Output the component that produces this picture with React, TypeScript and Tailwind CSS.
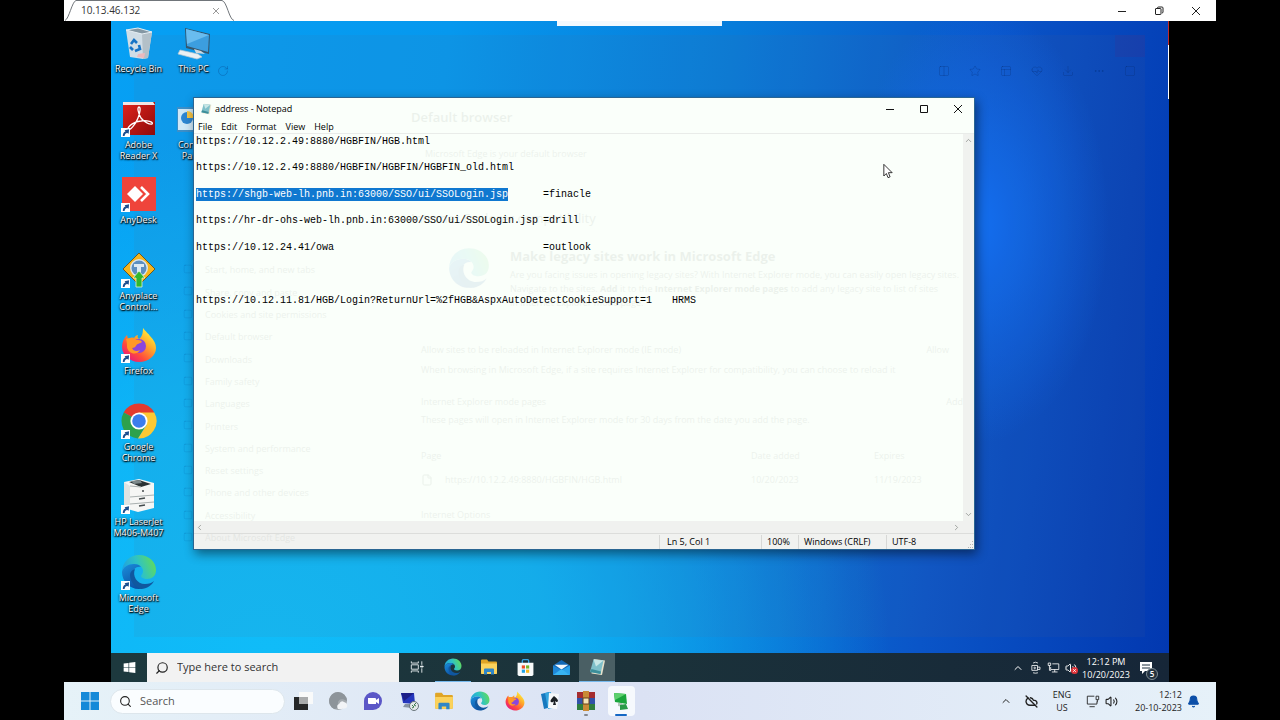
import { ReactNode } from 'react';
import {
  Bell,
  ChevronDown,
  ChevronLeft,
  ChevronRight,
  ChevronUp,
  CloudOff,
  Columns2,
  Download,
  Ellipsis,
  File,
  HeartPulse,
  PanelsTopLeft,
  RotateCw,
  Search,
  Square,
  Star,
  Volume2,
} from 'lucide-react';

interface IconProps {
  className?: string;
}

/* ---------- App icons ---------- */

function EdgeIcon({ className }: IconProps) {
  return (
    <svg viewBox="0 0 36 36" className={className}>
      <defs>
        <linearGradient id="edgeTop" x1="0" y1="0.6" x2="1" y2="0.3">
          <stop offset="0" stopColor="#1f9fe0" />
          <stop offset="0.5" stopColor="#2fc3c4" />
          <stop offset="1" stopColor="#62dc57" />
        </linearGradient>
        <linearGradient id="edgeBody" x1="0" y1="0" x2="0.6" y2="1">
          <stop offset="0" stopColor="#1b8fdc" />
          <stop offset="1" stopColor="#0b4fa3" />
        </linearGradient>
      </defs>
      <path d="M1 18C1 8 9 1 18 1c10 0 17 7 17 15 0 6-4 9-9 9-4 0-6-2-6-3 0-1 2-2 2-5 0-4-4-7-9-7-6 0-11 3-12 8Z" fill="url(#edgeTop)" />
      <path d="M1 18c1-5 6-8 12-8 3 0 6 1 7 3-6-1-9 4-8 9 1 6 6 11 12 11-2 1-4 2-6 2C8 35 1 27 1 18Z" fill="url(#edgeBody)" />
      <path d="M14 15c-3 7 2 15 10 15 4 0 7-1 9-3-2 4-7 8-13 8-7-2-11-8-11-14 0-3 2-5 5-6Z" fill="#10579f" />
    </svg>
  );
}

function FirefoxIcon({ className }: IconProps) {
  return (
    <svg viewBox="0 0 36 36" className={className}>
      <defs>
        <linearGradient id="foxBody" x1="0.85" y1="0.1" x2="0.15" y2="0.95">
          <stop offset="0" stopColor="#fff13a" />
          <stop offset="0.35" stopColor="#ffa62b" />
          <stop offset="0.7" stopColor="#ff4a3c" />
          <stop offset="1" stopColor="#e31587" />
        </linearGradient>
      </defs>
      <path d="M22 1c2 3 6 6 7 8 4 4 6 8 6 12 0 8-8 14-17 14S1 28 1 20c0-5 2-9 5-12l1 4c2-1 4-2 6-1 1-2 3-3 4-3-1 2 0 3 1 4 3-2 4-6 4-11Z" fill="url(#foxBody)" />
      <circle cx="18" cy="19" r="7" fill="#8a46dc" />
      <path d="M5 12c4-2 8-1 10 1 3 0 5 0 6 2-2 2-5 1-6 4-1 1-2 2-4 2 1 3 5 4 8 2-3 6-12 4-13-3 0-3 0-5-1-8Z" fill="#ff9827" />
    </svg>
  );
}

function ChromeIcon({ className }: IconProps) {
  return (
    <svg viewBox="0 0 36 36" className={className}>
      <path d="M18 18 2.700 9.500A17.500 17.500 0 0 1 33.300 9.500Z" fill="#e33b2e" />
      <path d="M18 18 2.700 9.500A17.500 17.500 0 0 0 17 35.500L25 22Z" fill="#2da14c" />
      <path d="M18 9.500h15.300A17.500 17.500 0 0 1 17 35.500L25.500 22Z" fill="#fcc934" />
      <circle cx="18" cy="18" r="8.600" fill="#fff" />
      <circle cx="18" cy="18" r="6.800" fill="#3b7ded" />
    </svg>
  );
}

function RecycleBinIcon({ className }: IconProps) {
  return (
    <svg viewBox="0 0 36 36" className={className}>
      <path d="m5 5 26 2-4 26-5 1-13-2Z" fill="#d0dde6" />
      <path d="m21 8 10-1-4 26-5 1Z" fill="#b3c0c8" />
      <path d="m5 5 12-2 14 4-10 2Z" fill="#8497a3" stroke="#e6eef3" />
      <g fill="none" stroke="#1673c6" strokeWidth="2.600">
        <path d="m10 19 3-4 3 3" />
        <path d="m18 20 1 4-5 2" />
        <path d="m12 25-3-3" />
      </g>
      <path d="m17 29 7-1-1 5-7-1Z" fill="#edb9bd" />
    </svg>
  );
}

function ThisPcIcon({ className }: IconProps) {
  return (
    <svg viewBox="0 0 36 36" className={className}>
      <path d="m9 3 25 6-1 20-23-6Z" fill="#35566d" />
      <path d="m10 4 23 6-1 17-21-6Z" fill="#3c9edf" />
      <path d="m10 4 23 6-22 9Z" fill="#69bcef" />
      <path d="m18 24 7 2 4 3-9-1Z" fill="#cfd9df" />
      <path d="m4 25 18 4 4 3-5 2-19-5Z" fill="#eaf0f3" stroke="#b9c7cf" strokeWidth="0.700" />
    </svg>
  );
}

function AdobeIcon({ className }: IconProps) {
  return (
    <svg viewBox="0 0 36 36" className={className}>
      <defs>
        <linearGradient id="adobeRed" x1="0" y1="0" x2="1" y2="1">
          <stop offset="0" stopColor="#e0241b" />
          <stop offset="1" stopColor="#8f0a0b" />
        </linearGradient>
      </defs>
      <path d="M2 1h32v33H2Z" fill="url(#adobeRed)" />
      <path d="M2 1h30l2 3H2Z" fill="#f3e5e3" />
      <path d="M18 6c-2 0-1 6 2 11 3 4 9 7 11 6 2-2-5-4-11-3-6 0-13 5-13 8 1 3 8-5 10-11 2-5 3-11 1-11Z" fill="none" stroke="#fff" strokeWidth="1.300" />
    </svg>
  );
}

function AnyDeskIcon({ className }: IconProps) {
  return (
    <svg viewBox="0 0 36 36" className={className}>
      <path d="M1 1h34v34H1Z" fill="#ef443b" />
      <path d="m14 10 8 8-8 8-8-8Z" fill="#fff" />
      <path d="m20 11 7 7-7 7" fill="none" stroke="#fff" strokeWidth="2.600" />
    </svg>
  );
}

function AnyplaceIcon({ className }: IconProps) {
  return (
    <svg viewBox="0 0 36 36" className={className}>
      <path d="m18 1 16 16-16 16L2 17Z" fill="#f7b51c" stroke="#6d5a20" />
      <circle cx="18" cy="16" r="9" fill="#d8e6ef" />
      <circle cx="18" cy="16" r="7.500" fill="#5d8fc0" />
      <path d="M13 12h10v3h-3v5h-4v-5h-3Z" fill="#dceaf3" />
      <path d="m18 19 6 7h-3v9h-6v-9h-3Z" fill="#31b72c" stroke="#e0f3d5" strokeWidth="0.800" />
    </svg>
  );
}

function PrinterIcon({ className }: IconProps) {
  return (
    <svg viewBox="0 0 36 36" className={className}>
      <path d="m3 4 15-3 15 4v25l-16 4-14-4Z" fill="#f5f6f5" />
      <path d="m8 4 10-2 12 4-10 3Z" fill="#2a3234" />
      <path d="m10 3 9-1 2 3-8 1Z" fill="#7d898c" />
      <path d="m3 4 6 4v24l-6-3Z" fill="#dfe3e2" />
      <path d="m9 19 24-2M9 26l24-2M9 8l11 1" stroke="#a9b0b0" fill="none" />
      <path d="m18 21 6-1m-6 8 6-1m-3-14h2" stroke="#444b4d" strokeWidth="1.600" />
    </svg>
  );
}

function ControlPanelIcon({ className }: IconProps) {
  return (
    <svg viewBox="0 0 36 36" className={className}>
      <path d="M1 6h34v25H1Z" fill="#3c8fc8" />
      <path d="M2 8h32v21H2Z" fill="#cfe8f7" />
      <circle cx="11" cy="17" r="6" fill="#2c86d2" />
      <path d="M11 17V10a7 7 0 0 1 7 7Z" fill="#f6c544" />
      <path d="M22 13h9M22 18h9M22 23h9" stroke="#5a9ecb" strokeWidth="2" />
    </svg>
  );
}

function NotepadIcon({ className }: IconProps) {
  return (
    <svg viewBox="0 0 36 36" className={className}>
      <path d="m12 2 22 3-6 29-21-3Z" fill="#e8e2cc" />
      <path d="m11 3 20 2-6 27-21-4Z" fill="#7fc0c9" />
      <path d="m11 3 20 2-15 12Z" fill="#c7e7e6" />
      <path d="m4 28 21 4 1-5-19-5Z" fill="#3c8e99" />
    </svg>
  );
}

function FolderIcon({ className }: IconProps) {
  return (
    <svg viewBox="0 0 36 36" className={className}>
      <path d="M2 5q0-2 2-2h10l3 4h15q2 0 2 2v21q0 2-2 2H4q-2 0-2-2Z" fill="#e0a526" />
      <path d="M2 11h32v19q0 2-2 2H4q-2 0-2-2Z" fill="#fbd25c" />
      <path d="M8 33V23q0-2 2-2h16q2 0 2 2v10h-6v-5h-8v5Z" fill="#2f86c8" />
    </svg>
  );
}

function StoreIcon({ className }: IconProps) {
  return (
    <svg viewBox="0 0 36 36" className={className}>
      <path d="M12 10V5q0-2 2-2h8q2 0 2 2v5" fill="none" stroke="#36a4e4" strokeWidth="2.500" />
      <path d="M3 9h30v22q0 3-3 3H6q-3 0-3-3Z" fill="#f7fafa" />
      <path d="M11 14h6v6h-6Z" fill="#ee4f27" />
      <path d="M19 14h6v6h-6Z" fill="#78b82a" />
      <path d="M11 22h6v6h-6Z" fill="#1fa2e5" />
      <path d="M19 22h6v6h-6Z" fill="#f5b61d" />
    </svg>
  );
}

function MailIcon({ className }: IconProps) {
  return (
    <svg viewBox="0 0 36 36" className={className}>
      <path d="m2 14 16-10 16 10v18H2Z" fill="#1268b5" />
      <path d="M5 13h26l-13 9Z" fill="#f2f8fb" />
      <path d="m2 14 16 9L2 32Z" fill="#1f88d8" />
      <path d="m34 14-16 9 16 9Z" fill="#2ba3ea" />
      <path d="m2 32 16-11 16 11Z" fill="#38b4f2" />
    </svg>
  );
}

function TaskViewDark({ className }: IconProps) {
  return (
    <svg viewBox="0 0 16 16" className={className} fill="none" stroke="#eef4f5">
      <path d="M1.500 5.500h8v5h-8ZM1.500 1.500v2h8v-2M1.500 14.500v-2h8v2M13.500 1.500v4M13.500 9.500v5" />
      <path d="M12 7h3v1h-3Z" fill="#eef4f5" />
    </svg>
  );
}

function TaskViewLight({ className }: IconProps) {
  return (
    <svg viewBox="0 0 20 20" className={className}>
      <path d="M1 6h14v13H1Z" fill="#262728" />
      <path d="M6 1h14v12H6Z" fill="#f9fafa" />
      <path d="M6 6h9v7H6Z" fill="#a9abac" />
    </svg>
  );
}

function CopilotIcon({ className }: IconProps) {
  return (
    <svg viewBox="0 0 20 20" className={className}>
      <circle cx="10" cy="10" r="9" fill="#a5abb0" />
      <path d="M10 1a9 9 0 0 1 9 9c-6-4-10-1-9 4 0 3-2 4-4 4A9 9 0 0 1 10 1Z" fill="#8d949a" />
      <path d="M10 18q-2-4 1-5 2-4 5-2 4 1 3 5-1 2-9 2Z" fill="#f2f4f7" />
    </svg>
  );
}

function ChatIcon({ className }: IconProps) {
  return (
    <svg viewBox="0 0 20 20" className={className}>
      <path d="M1 19V10a9 9 0 1 1 9 9Z" fill="#5b57c7" />
      <path d="M5 7h7q1 0 1 1v5H6q-1 0-1-1ZM13 9l3-2v6l-3-2Z" fill="#fff" />
    </svg>
  );
}

function RemoteIcon({ className }: IconProps) {
  return (
    <svg viewBox="0 0 20 20" className={className}>
      <path d="m2 2 13 0 1 11-12-1Z" fill="#2537bd" />
      <path d="m2 2 13 0-10 8Z" fill="#1d1f88" />
      <path d="m6 13 5 0 2 4-9-1Z" fill="#8793a4" />
      <circle cx="15" cy="15" r="4.500" fill="#e4e9ea" stroke="#69747a" />
      <path d="m13 14 2 2-2 1m4-5-2 2 2 1" stroke="#3d7a4f" fill="none" />
    </svg>
  );
}

function SolitaireIcon({ className }: IconProps) {
  return (
    <svg viewBox="0 0 20 20" className={className}>
      <path d="m1 3 8-2 2 15-7 2Z" fill="#1879bf" />
      <path d="m5 2 6-1 2 16-5 1Z" fill="#35a6df" />
      <path d="m9 2 10 1-2 15-9-1Z" fill="#f6f8fa" />
      <path d="M14 5q-5 5-3 6 2 1 3-1l-1 4h3l-1-4q2 2 3 0 0-2-4-5Z" fill="#1a1f24" />
    </svg>
  );
}

function WinRarIcon({ className }: IconProps) {
  return (
    <svg viewBox="0 0 20 20" className={className}>
      <path d="M1 1h18v6H1Z" fill="#a52c2f" />
      <path d="M1 7h18v6H1Z" fill="#3152a8" />
      <path d="M1 13h18v6H1Z" fill="#2f7d3d" />
      <path d="M7 0h6v20H7Z" fill="#c98a36" />
      <path d="M7 7h6v6H7Z" fill="#f4e3b5" stroke="#6b431a" />
    </svg>
  );
}

function AnyConnectIcon({ className }: IconProps) {
  return (
    <svg viewBox="0 0 20 20" className={className}>
      <path d="m3 2 12 1 1 10-12-2Z" fill="#19a53b" />
      <path d="m3 2 12 1-11 6Z" fill="#5dd06d" />
      <path d="m7 12 4 0 1 4-5-1Z" fill="#b3c4b9" />
      <path d="m9 14 6-1 2 5-8 1Z" fill="#2a9a48" />
    </svg>
  );
}

function WindowsLogo({ className }: IconProps) {
  return (
    <svg viewBox="0 0 20 20" className={className} fill="currentColor">
      <path d="M1 1h8.500v8.500H1ZM10.500 1H19v8.500h-8.500ZM1 10.500h8.500V19H1ZM10.500 10.500H19V19h-8.500Z" />
    </svg>
  );
}

function WindowsLogoSkewed({ className }: IconProps) {
  return (
    <svg viewBox="0 0 20 20" className={className} fill="currentColor">
      <path d="m1 4 7.500-1v6.500H1ZM9.500 2.800 19 1.500v8H9.500ZM1 10.500h7.500V17L1 16ZM9.500 10.500H19v8l-9.500-1.300Z" />
    </svg>
  );
}

function ShortcutArrow() {
  return (
    <svg viewBox="0 0 10 10" className="absolute bottom-0 left-0 size-[9px]">
      <path d="M0 0h10v10H0Z" fill="#fff" />
      <path d="M2 9q0-4 3-5L4 2.500l5-1-.500 5L7 5.500Q4 6 4 9Z" fill="#1c4f8f" />
    </svg>
  );
}

function NetworkIcon({ className }: IconProps) {
  return (
    <svg viewBox="0 0 16 16" className={className} fill="none" stroke="currentColor">
      <path d="M6.500 3.500h8v7h-10v-3M9.500 10.500v3M6 13.500h7" />
      <path d="M1.500 2.500h3v3h-3ZM3 5.500v6h2" />
    </svg>
  );
}

function DisplayIcon({ className }: IconProps) {
  return (
    <svg viewBox="0 0 16 16" className={className} fill="none" stroke="currentColor">
      <path d="M9.500 2.500h-8v9h11v-3M4 14.500h6" />
      <path d="M11.500 2.500h3v4h-3ZM13 6.500v3" />
    </svg>
  );
}

function MeetIcon({ className }: IconProps) {
  return (
    <svg viewBox="0 0 16 16" className={className} fill="none" stroke="currentColor">
      <path d="M3.500 5.500h7v6h-7ZM10.500 7.500h3v3h-3M5 2.500q3-2 6 0M5 14.500q3 1 6 0" />
      <circle cx="7" cy="8.500" r="1" />
    </svg>
  );
}

/* ---------- Remote session tab strip ---------- */

function SessionBar() {
  return (
    <header className="flex h-[21px] shrink-0 items-stretch justify-between bg-white">
      <div className="relative flex w-[172px] items-center justify-between pl-[17px] pr-4">
        <svg viewBox="0 0 172 21" className="absolute inset-0 size-full" fill="none" stroke="#70757a">
          <path d="M1 20.500C5 19 8 1.500 12 .5H158c5 1 7 19 12 20" />
        </svg>
        <span className="relative text-[10px] text-[#333]">10.13.46.132</span>
        <button aria-label="Close tab" className="relative">
          <svg viewBox="0 0 8 8" className="size-2" stroke="#999"><path d="m1 1 6 6M7 1 1 7" /></svg>
        </button>
      </div>
      <div className="flex items-center gap-[27px] pr-[15px] text-[#222]">
        <button aria-label="Minimize session">
          <svg viewBox="0 0 10 10" className="size-[10px]" stroke="currentColor"><path d="M1 5.500h8" /></svg>
        </button>
        <button aria-label="Restore session">
          <svg viewBox="0 0 10 10" className="size-[10px]" fill="none" stroke="currentColor">
            <path d="M1.500 3q0-.5.500-.5h4.500q.5 0 .5.500v5q0 .5-.5.500H2q-.5 0-.5-.5ZM3.500 2q0-1 1-1h3.500q1 0 1 1v4q0 1-1 1" />
          </svg>
        </button>
        <button aria-label="Close session">
          <svg viewBox="0 0 10 10" className="size-[10px]" stroke="currentColor"><path d="m1 1 8 8M9 1 1 9" /></svg>
        </button>
      </div>
    </header>
  );
}

/* ---------- Desktop ---------- */

interface Shortcut {
  name: string;
  icon: ReactNode;
  linked?: boolean;
}

const iconSize = 'size-9';

const firstColumn: Shortcut[] = [
  { name: 'Recycle Bin', icon: <RecycleBinIcon className={iconSize} /> },
  { name: 'Adobe Reader X', icon: <AdobeIcon className={iconSize} />, linked: true },
  { name: 'AnyDesk', icon: <AnyDeskIcon className={iconSize} />, linked: true },
  { name: 'Anyplace Control...', icon: <AnyplaceIcon className={iconSize} />, linked: true },
  { name: 'Firefox', icon: <FirefoxIcon className={iconSize} />, linked: true },
  { name: 'Google Chrome', icon: <ChromeIcon className={iconSize} />, linked: true },
  { name: 'HP LaserJet M406-M407', icon: <PrinterIcon className={iconSize} />, linked: true },
  { name: 'Microsoft Edge', icon: <EdgeIcon className={iconSize} />, linked: true },
];

const secondColumn: Shortcut[] = [
  { name: 'This PC', icon: <ThisPcIcon className={iconSize} /> },
  { name: 'Control Panel', icon: <ControlPanelIcon className={iconSize} /> },
];

function DesktopColumn({ items }: { items: Shortcut[] }) {
  return (
    <div className="grid h-[604px] w-[55px] grid-rows-8">
      {items.map((item) => (
        <button key={item.name} className="flex flex-col items-center">
          <span className="relative">
            {item.icon}
            {item.linked && <ShortcutArrow />}
          </span>
          <span className="mt-[2px] w-[54px] text-center text-[9px] leading-[11px] text-white [text-shadow:0_1px_2px_#000,1px_1px_1px_#000,0_0_2px_#0008]">
            {item.name}
          </span>
        </button>
      ))}
    </div>
  );
}

/* ---------- Notepad ---------- */

interface NoteLine {
  url: string;
  note?: string;
  selected?: boolean;
}

const noteLines: NoteLine[] = [
  { url: 'https://10.12.2.49:8880/HGBFIN/HGB.html' },
  { url: 'https://10.12.2.49:8880/HGBFIN/HGBFIN/HGBFIN_old.html' },
  { url: 'https://shgb-web-lh.pnb.in:63000/SSO/ui/SSOLogin.jsp', note: '=finacle', selected: true },
  { url: 'https://hr-dr-ohs-web-lh.pnb.in:63000/SSO/ui/SSOLogin.jsp', note: '=drill' },
  { url: 'https://10.12.24.41/owa', note: '=outlook' },
  { url: '' },
  { url: 'https://10.12.11.81/HGB/Login?ReturnUrl=%2fHGB&AspxAutoDetectCookieSupport=1', note: 'HRMS' },
];

function Notepad() {
  return (
    <section className="absolute left-[82px] top-[76px] flex h-[453px] w-[782px] flex-col border border-[#2a6592] bg-[#fafffa] text-[9px] text-black shadow-[2px_4px_10px_#0007]">
      <div className="flex h-[22px] shrink-0 items-center justify-between pl-[6px] pr-[11px]">
        <h1 className="flex items-center gap-[3px]">
          <NotepadIcon className="size-3" />
          address - Notepad
        </h1>
        <div className="flex items-center gap-6">
          <button aria-label="Minimize">
            <svg viewBox="0 0 10 10" className="size-[10px]" stroke="#111"><path d="M1 5.500h8" /></svg>
          </button>
          <button aria-label="Maximize">
            <svg viewBox="0 0 10 10" className="size-[10px]" fill="none" stroke="#111"><path d="M1.500 1.500h7v7h-7Z" /></svg>
          </button>
          <button aria-label="Close">
            <svg viewBox="0 0 10 10" className="size-[10px]" stroke="#111"><path d="m1 1 8 8M9 1 1 9" /></svg>
          </button>
        </div>
      </div>
      <nav className="flex h-[14px] shrink-0 items-center gap-[9px] border-b border-[#e9ece9] pl-1">
        <button>File</button>
        <button>Edit</button>
        <button>Format</button>
        <button>View</button>
        <button>Help</button>
      </nav>

      <div className="flex min-h-0 flex-1">
        <div
          role="textbox"
          aria-label="Document"
          aria-multiline="true"
          contentEditable
          suppressContentEditableWarning
          className="mt-[1px] grid h-[185px] flex-1 grid-rows-7 pl-[2px] font-['Liberation_Mono',monospace] text-[10px] leading-[13px] outline-none"
        >
          {noteLines.map((line, index) => (
            <div
              key={index}
              className={
                line.note === 'HRMS'
                  ? 'grid grid-cols-[476px_1fr] items-start'
                  : 'grid grid-cols-[347px_1fr] items-start'
              }
            >
              <span className={line.selected ? 'justify-self-start bg-[#0f78d0] text-white' : ''}>{line.url}</span>
              <span>{line.note}</span>
            </div>
          ))}
        </div>
        <div className="flex w-[11px] flex-col items-center justify-between bg-[#f0f2ef] py-[2px] text-[#8a8d8a]">
          <button aria-label="Scroll up"><ChevronUp className="size-[9px]" /></button>
          <button aria-label="Scroll down"><ChevronDown className="size-[9px]" /></button>
        </div>
      </div>
      <div className="flex h-3 shrink-0 items-center justify-between bg-[#f0f1ef] pl-[1px] pr-[13px] text-[#8a8d8a]">
        <button aria-label="Scroll left"><ChevronLeft className="size-[9px]" /></button>
        <button aria-label="Scroll right"><ChevronRight className="size-[9px]" /></button>
      </div>
      <footer className="flex h-4 shrink-0 items-center justify-end border-t border-[#dcdddb] bg-[#f1f2f0] leading-[14px]">
        <span className="w-[102px] border-l border-[#d7d8d6] pl-[7px]">Ln 5, Col 1</span>
        <span className="w-[37px] border-l border-[#d7d8d6] pl-[5px]">100%</span>
        <span className="w-[88px] border-l border-[#d7d8d6] pl-[5px]">Windows (CRLF)</span>
        <span className="flex w-[88px] items-end justify-between border-l border-[#d7d8d6] pl-[5px]">
          UTF-8
          <svg viewBox="0 0 8 8" className="size-2" fill="#b5b7b4">
            <path d="M6 0h1v1H6ZM4 3h1v1H4ZM6 3h1v1H6ZM2 6h1v1H2ZM4 6h1v1H4ZM6 6h1v1H6Z" />
          </svg>
        </span>
      </footer>
    </section>
  );
}

/* ---------- Edge settings window, nearly faded out ---------- */

const settingsPages = [
  'Start, home, and new tabs',
  'Share, copy and paste',
  'Cookies and site permissions',
  'Default browser',
  'Downloads',
  'Family safety',
  'Languages',
  'Printers',
  'System and performance',
  'Reset settings',
  'Phone and other devices',
  'Accessibility',
  'About Microsoft Edge',
];

// frame and toolbar, behind the notepad window
function FadingFrame() {
  return (
    <div
      aria-hidden="true"
      className="pointer-events-none absolute bottom-4 left-[23px] right-6 top-[14px] flex flex-col bg-[#606080]/8"
    >
      <div className="flex h-[22px] shrink-0 justify-end">
        <div className="w-[30px] bg-[#502080]/15" />
      </div>
      <div className="flex h-[28px] shrink-0 items-center text-[#082a70]/25">
        <RotateCw className="ml-[83px] size-3" />
        <div className="ml-auto flex items-center gap-[19px] pr-[9px]">
          <Columns2 className="size-3" />
          <Star className="size-3" />
          <PanelsTopLeft className="size-3" />
          <HeartPulse className="size-3" />
          <Download className="size-3" />
          <Ellipsis className="size-3" />
          <Square className="size-3" />
        </div>
      </div>
      <div className="mt-[173px] grid h-[290px] shrink-0 grid-rows-13 items-center pl-[49px] text-[#082a70]/10">
        {settingsPages.map((page) => (
          <Square key={page} className="size-[10px]" />
        ))}
      </div>
    </div>
  );
}

// page text, which shows through the notepad window
function FadingPage() {
  return (
    <div
      aria-hidden="true"
      className="pointer-events-none absolute left-[94px] top-[76px] flex h-[452px] w-[768px] overflow-hidden whitespace-nowrap text-[9px] text-[#4f604f] opacity-8"
    >
      <ul className="mt-[162px] grid h-[290px] w-[206px] shrink-0 grid-rows-13 items-center">
        {settingsPages.map((page) => (
          <li key={page}>{page}</li>
        ))}
      </ul>
      <div className="flex flex-col pt-[11px]">
        <h2 className="h-[39px] text-[13px] font-semibold leading-[19px]">Default browser</h2>
        <p className="h-[62px] pl-[14px]">Microsoft Edge is your default browser</p>
        <h2 className="h-[36px] text-[13px] leading-[19px]">Internet Explorer compatibility</h2>
        <div className="flex h-[98px] gap-5">
          <EdgeIcon className="ml-[37px] mt-[2px] size-[42px]" />
          <div className="leading-[14px]">
            <h3 className="text-[13px] font-bold leading-[23px]">Make legacy sites work in Microsoft Edge</h3>
            <p>Are you facing issues in opening legacy sites? With Internet Explorer mode, you can easily open legacy sites.</p>
            <p>
              Navigate to the sites. <b>Add</b> it to the <b>Internet Explorer mode pages</b> to add any legacy site to list of sites
            </p>
            <p>in Internet Explorer mode page.</p>
          </div>
        </div>
        <div className="w-[552px] pl-[10px]">
          <div className="flex h-5 justify-between pr-[14px]">
            <span>Allow sites to be reloaded in Internet Explorer mode (IE mode)</span>
            <span>Allow</span>
          </div>
          <p className="h-8">When browsing in Microsoft Edge, if a site requires Internet Explorer for compatibility, you can choose to reload it</p>
          <div className="flex h-[18px] justify-between">
            <span>Internet Explorer mode pages</span>
            <span>Add</span>
          </div>
          <p className="h-[31px]">These pages will open in Internet Explorer mode for 30 days from the date you add the page.</p>
          <div className="grid grid-cols-[330px_123px_1fr] leading-6">
            <span>Page</span>
            <span>Date added</span>
            <span>Expires</span>
            <span className="flex items-center gap-3">
              <File className="size-3" />
              https://10.12.2.49:8880/HGBFIN/HGB.html
            </span>
            <span>10/20/2023</span>
            <span>11/19/2023</span>
          </div>
          <p className="mt-4">Internet Options</p>
        </div>
      </div>
    </div>
  );
}

/* ---------- Inner (remote) taskbar ---------- */

const remoteApps = [
  { name: 'Task View', icon: <TaskViewDark className="size-[14px]" /> },
  { name: 'Microsoft Edge', icon: <EdgeIcon className="size-[18px]" />, running: true },
  { name: 'File Explorer', icon: <FolderIcon className="size-[18px]" /> },
  { name: 'Microsoft Store', icon: <StoreIcon className="size-[19px]" /> },
  { name: 'Mail', icon: <MailIcon className="size-[19px]" /> },
  { name: 'Notepad', icon: <NotepadIcon className="size-[18px]" />, running: true, active: true },
];

function RemoteTaskbar() {
  return (
    <div className="flex h-[29px] shrink-0 items-stretch justify-between bg-linear-to-r from-[#1d393e] via-[#1b323a] to-[#162638] text-white">
      <div className="flex">
        <button aria-label="Start" className="flex w-9 items-center justify-center">
          <WindowsLogoSkewed className="size-[13px]" />
        </button>
        <label className="flex w-[252px] items-center gap-2 bg-[#f2f2f2] pl-2 text-[#222]">
          <Search className="size-[14px] shrink-0 -scale-x-100" strokeWidth={2} />
          <input
            aria-label="Type here to search"
            placeholder="Type here to search"
            className="w-full min-w-0 bg-transparent text-[11px] outline-none placeholder:text-[#333]"
          />
        </label>
        {remoteApps.map((app) => (
          <button
            key={app.name}
            aria-label={app.name}
            className={`flex w-9 items-center justify-center border-b ${app.active ? 'bg-[#4a5f64]' : ''} ${
              app.running ? 'border-[#76b9ed]' : 'border-transparent'
            }`}
          >
            {app.icon}
          </button>
        ))}
      </div>
      <div className="flex items-center gap-[5px] pr-4">
        <button aria-label="Show hidden icons"><ChevronUp className="size-3" /></button>
        <MeetIcon className="size-[13px]" />
        <NetworkIcon className="size-[13px]" />
        <span className="relative">
          <Volume2 className="size-3" strokeWidth={2} />
          <svg viewBox="0 0 8 8" className="absolute -right-[1px] bottom-0 size-[7px]">
            <circle cx="4" cy="4" r="4" fill="#e0343a" />
            <path d="m2.500 2.500 3 3m0-3-3 3" stroke="#fff" />
          </svg>
        </span>
        <div className="w-12 text-center text-[9px] leading-[13px]">
          <div>12:12 PM</div>
          <div>10/20/2023</div>
        </div>
        <button aria-label="5 notifications" className="relative ml-1">
          <svg viewBox="0 0 14 14" className="size-[14px]">
            <path d="M1 1h12v9H6l-3 3v-3H1Z" fill="#fff" />
            <path d="M3 4h8M3 7h8" stroke="#1b2c3c" />
          </svg>
          <span className="absolute -bottom-[5px] -right-[5px] flex size-3 items-center justify-center rounded-full border border-[#7d8a92] bg-[#24323e] text-[8px] font-semibold leading-none">
            5
          </span>
        </button>
      </div>
    </div>
  );
}

/* ---------- Host taskbar ---------- */

const hostApps = [
  { name: 'Task View', icon: <TaskViewLight className="size-5" /> },
  { name: 'Copilot', icon: <CopilotIcon className="size-5" /> },
  { name: 'Chat', icon: <ChatIcon className="size-5" /> },
  { name: 'Remote Desktop', icon: <RemoteIcon className="size-5" /> },
  { name: 'File Explorer', icon: <FolderIcon className="size-5" /> },
  { name: 'Microsoft Edge', icon: <EdgeIcon className="size-5" /> },
  { name: 'Firefox', icon: <FirefoxIcon className="size-5" /> },
  { name: 'Solitaire', icon: <SolitaireIcon className="size-5" /> },
  { name: 'WinRAR', icon: <WinRarIcon className="size-5" />, mark: 'w-1 bg-[#85888f]' },
  { name: 'AnyConnect', icon: <AnyConnectIcon className="size-5" />, mark: 'w-3 bg-[#1467c4]', active: true },
];

function HostTaskbar() {
  return (
    <footer className="flex h-[38px] shrink-0 items-center justify-between bg-linear-to-r from-[#e6f2f8] via-[#dbe2f4] to-[#e6f1f9] pl-4 pr-4 text-[#222]">
      <div className="flex items-center">
        <button aria-label="Start">
          <WindowsLogo className="size-5 text-[#1489d8]" />
        </button>
        <label className="ml-[10px] flex h-[25px] w-[175px] items-center gap-2 rounded-full border border-[#dde6ec] bg-[#fafdff] pl-2">
          <Search className="size-[13px] shrink-0" strokeWidth={2} />
          <input
            aria-label="Search"
            placeholder="Search"
            className="w-full min-w-0 bg-transparent text-[11px] outline-none placeholder:text-[#555]"
          />
        </label>
        <div className="grid w-[354px] grid-cols-10">
          {hostApps.map((app) => (
            <button
              key={app.name}
              aria-label={app.name}
              className="relative flex h-[30px] items-center justify-center"
            >
              {app.active && <span className="absolute inset-x-1 inset-y-0 rounded bg-[#f6f9fd]" />}
              <span className="relative">{app.icon}</span>
              {app.mark && <span className={`absolute bottom-0 h-[2px] rounded-full ${app.mark}`} />}
            </button>
          ))}
        </div>
      </div>
      <div className="flex items-center text-[9px] leading-[13px]">
        <button aria-label="Show hidden icons"><ChevronUp className="size-3" /></button>
        <CloudOff className="ml-[13px] size-[13px]" strokeWidth={2.500} />
        <div className="ml-3 w-6 text-center">
          <div>ENG</div>
          <div>US</div>
        </div>
        <DisplayIcon className="ml-3 size-[14px]" />
        <Volume2 className="ml-[5px] size-[13px]" strokeWidth={2} />
        <div className="ml-2 w-14 text-right">
          <div>12:12</div>
          <div>20-10-2023</div>
        </div>
        <Bell className="ml-[5px] size-[13px] fill-[#0c4fa8] text-[#0c4fa8]" />
      </div>
    </footer>
  );
}

export default function App() {
  return (
    <div className="h-screen bg-black px-[5%] font-['Open_Sans','Noto_Sans',sans-serif]">
      <div className="flex h-full flex-col">
        <SessionBar />
        <div className="mx-[47px] flex min-h-0 flex-1 flex-col">
          <main className="relative min-h-0 flex-1 overflow-hidden bg-[radial-gradient(ellipse_130px_220px_at_82%_32%,#0d6ff8_0%,#0d6ff800_100%),radial-gradient(ellipse_620px_520px_at_15%_100%,#10bcf8_0%,#10bcf8cc_45%,#10bcf800_100%),linear-gradient(97deg,#06a0f4_0%,#0698ee_30%,#077cda_55%,#0a55c8_78%,#0238b0_100%)]">
            <div className="absolute left-[446px] top-0 h-[5px] w-[165px] bg-white/95" />
            <div className="absolute right-0 top-6 h-[54px] w-[1px] bg-white" />
            <div className="absolute right-0 top-0 h-6 w-[1px] bg-[#c02a2a]" />
            <FadingFrame />
            <div className="flex pt-1">
              <DesktopColumn items={firstColumn} />
              <DesktopColumn items={secondColumn} />
            </div>
            <Notepad />
            <FadingPage />
            <svg viewBox="0 0 12 18" className="absolute left-[772px] top-[142px] h-[16px] w-[10px]">
              <path d="M1 1v14l3-3 2 5 2.500-1-2-5H11Z" fill="#fff" stroke="#111" />
            </svg>
          </main>
          <RemoteTaskbar />
        </div>
        <HostTaskbar />
      </div>
    </div>
  );
}
